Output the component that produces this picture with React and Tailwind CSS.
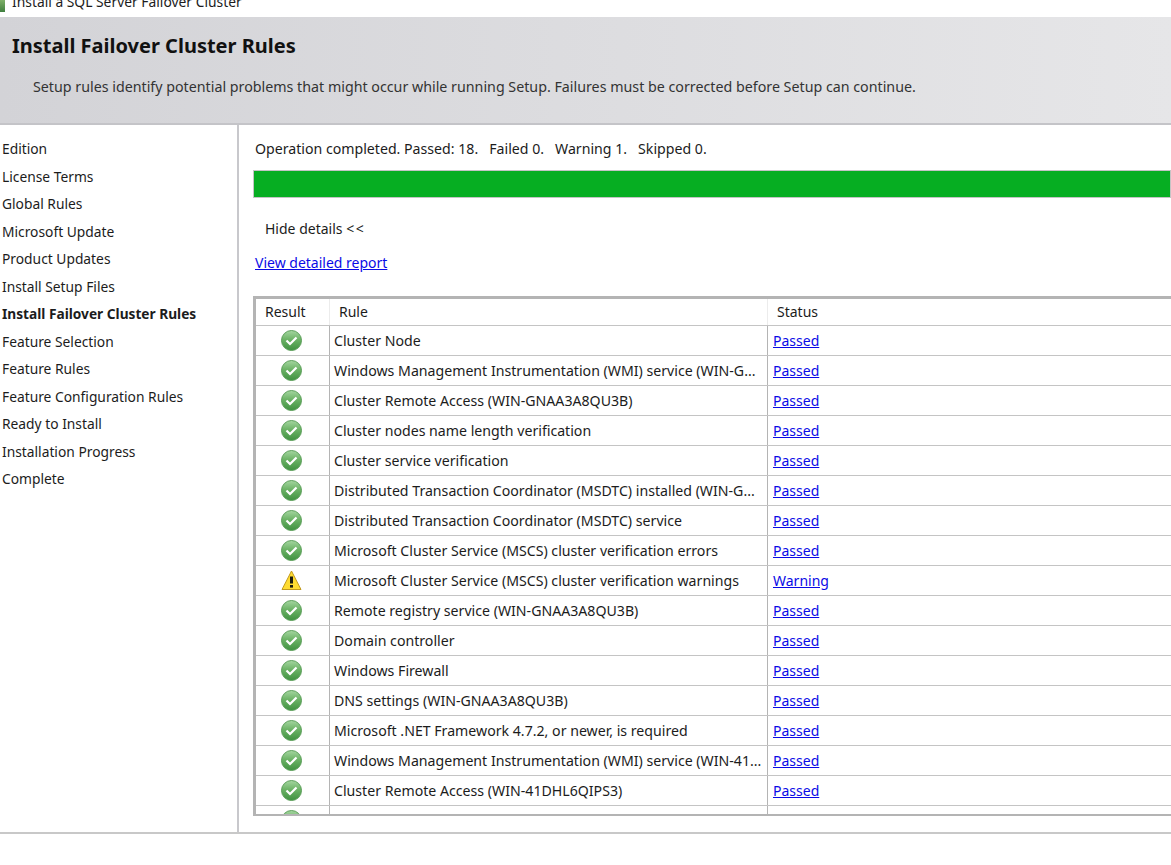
const steps = [
  "Edition",
  "License Terms",
  "Global Rules",
  "Microsoft Update",
  "Product Updates",
  "Install Setup Files",
  "Install Failover Cluster Rules",
  "Feature Selection",
  "Feature Rules",
  "Feature Configuration Rules",
  "Ready to Install",
  "Installation Progress",
  "Complete",
];

const rules = [
  ["Cluster Node", "Passed"],
  ["Windows Management Instrumentation (WMI) service (WIN-G...", "Passed"],
  ["Cluster Remote Access (WIN-GNAA3A8QU3B)", "Passed"],
  ["Cluster nodes name length verification", "Passed"],
  ["Cluster service verification", "Passed"],
  ["Distributed Transaction Coordinator (MSDTC) installed (WIN-G...", "Passed"],
  ["Distributed Transaction Coordinator (MSDTC) service", "Passed"],
  ["Microsoft Cluster Service (MSCS) cluster verification errors", "Passed"],
  ["Microsoft Cluster Service (MSCS) cluster verification warnings", "Warning"],
  ["Remote registry service (WIN-GNAA3A8QU3B)", "Passed"],
  ["Domain controller", "Passed"],
  ["Windows Firewall", "Passed"],
  ["DNS settings (WIN-GNAA3A8QU3B)", "Passed"],
  ["Microsoft .NET Framework 4.7.2, or newer, is required", "Passed"],
  ["Windows Management Instrumentation (WMI) service (WIN-41...", "Passed"],
  ["Cluster Remote Access (WIN-41DHL6QIPS3)", "Passed"],
];

function PassIcon() {
  return (
    <svg width="21" height="21" viewBox="0 0 21 21">
      <defs>
        <linearGradient id="pass" x1="0" y1="0" x2="0" y2="1">
          <stop offset="0" stopColor="#a5d6a0" />
          <stop offset="0.45" stopColor="#6cb366" />
          <stop offset="1" stopColor="#3f9140" />
        </linearGradient>
      </defs>
      <circle cx="10.5" cy="10.5" r="10" fill="url(#pass)" stroke="#5c9f5a" strokeWidth="1" />
      <path d="M5.5 10.5l3.5 3.5 6.5-6.5" fill="none" stroke="#fff" strokeWidth="2.2" />
    </svg>
  );
}

function WarnIcon() {
  return (
    <svg width="21" height="21" viewBox="0 0 21 21">
      <path d="M10.5 1L20 19.5H1z" fill="#ffdc32" stroke="#c29a1e" strokeWidth="1" strokeLinejoin="round" />
      <rect x="9" y="6.5" width="3" height="7" fill="#1c1c10" />
      <rect x="9" y="15" width="3" height="2.6" fill="#1c1c10" />
    </svg>
  );
}

function RuleRow({ rule, status }) {
  return (
    <div className="flex h-[30px] shrink-0 border-b-[1.5px] border-[#c4c4c4]">
      <div className="flex w-[74px] shrink-0 items-center justify-center border-r border-[#b4b4b4] pr-[3px]">
        {status === "Warning" ? <WarnIcon /> : <PassIcon />}
      </div>
      <div className="flex w-[438px] shrink-0 items-center overflow-hidden whitespace-nowrap border-r border-[#b4b4b4] pl-[4px] text-[14.15px]">
        {rule}
      </div>
      <div className="flex items-center pl-[5px]">
        {status && <a href="#" className="text-[#0a0ae6] underline">{status}</a>}
      </div>
    </div>
  );
}

export default function App() {
  return (
    <div
      className="flex h-[865px] w-[1171px] flex-col overflow-hidden bg-white text-[14px] text-[#1c1c1c]"
      style={{ fontFamily: '"Noto Sans", "Open Sans", sans-serif' }}
    >
      {/* window title, cut off at the top */}
      <div className="flex h-[17px] shrink-0 items-end overflow-hidden pb-[6px] text-[13.85px] leading-[19px]">
        <div className="mb-[-3px] mr-[7px] h-[12px] w-[5px] shrink-0 self-start bg-gradient-to-b from-[#7fb069] to-[#3f7f3f]" />
        Install a SQL Server Failover Cluster
      </div>

      <div className="h-[108px] shrink-0 border-b-2 border-[#c4c4c8] bg-gradient-to-r from-[#d3d3d7] to-[#e6e6e8] pl-[12px] pt-[14px]">
        <h1 className="text-[20px] font-bold leading-[30px] text-[#111]">Install Failover Cluster Rules</h1>
        <p className="mt-[16px] pl-[21px] text-[14.25px] leading-[20px] text-[#333]">
          Setup rules identify potential problems that might occur while running Setup. Failures must be corrected before Setup can continue.
        </p>
      </div>

      <div className="flex h-[709px] shrink-0 border-b-2 border-[#c8c8c8]">
        <div className="w-[239px] shrink-0 border-r-2 border-[#c8c8cc] pl-[2px] pt-[10px] text-[13.8px]">
          {steps.map((s) => (
            <div key={s} className={s === "Install Failover Cluster Rules" ? "h-[27.5px] text-[13.7px] font-bold leading-[27px]" : "h-[27.5px] leading-[27px]"}>
              {s}
            </div>
          ))}
        </div>

        <div className="min-w-0 flex-1 pl-[14px] pt-[13px]">
          <div className="pl-[2px] text-[14.15px] leading-[22px]">
            Operation completed. Passed: 18.&nbsp;&nbsp; Failed 0.&nbsp;&nbsp; Warning 1.&nbsp;&nbsp; Skipped 0.
          </div>
          <div className="mt-[10px] h-[28px] border border-[#c4c4c4] bg-[#06ae22]" />
          <div className="mt-[20px] pl-[12px] leading-[22px]">
            Hide details <span className="tracking-[1.5px]">&lt;&lt;</span>
          </div>
          <a href="#" className="mt-[12px] block pl-[2px] leading-[22px] text-[#0a0ae6] underline">View detailed report</a>

          <div className="mt-[22px] flex h-[520px] flex-col overflow-hidden border-b-2 border-l-[3px] border-t-[3px] border-[#b4b4b4]">
            <div className="flex h-[27px] shrink-0 border-b-[1.5px] border-[#c4c4c4] leading-[25px]">
              <div className="w-[74px] shrink-0 border-r border-[#ececec] pl-[9px]">Result</div>
              <div className="w-[438px] shrink-0 border-r border-[#ececec] pl-[9px]">Rule</div>
              <div className="pl-[9px]">Status</div>
            </div>
            {rules.map(([rule, status]) => (
              <RuleRow key={rule} rule={rule} status={status} />
            ))}
            <RuleRow rule="" status="" />
          </div>
        </div>
      </div>
    </div>
  );
}
